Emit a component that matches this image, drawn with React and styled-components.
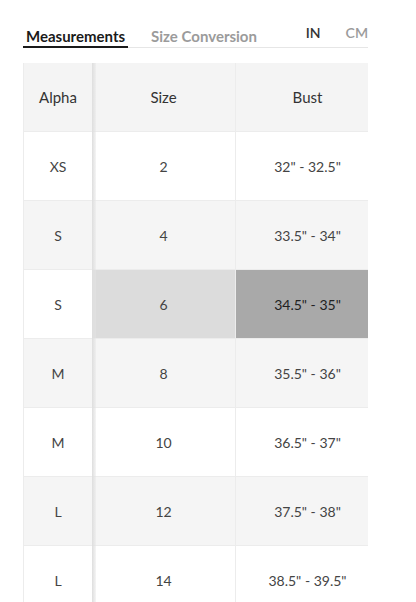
import React from "react";
import styled, { createGlobalStyle, css } from "styled-components";

const Global = createGlobalStyle`
  html, body { margin: 0; padding: 0; background: #fff; }
  body { font-family: Lato, "Noto Sans", sans-serif; color: #333; }
`;

const Page = styled.div`
  width: 345px;
  padding: 0 0 0 23px;
`;

const TabBar = styled.div`
  display: flex;
  align-items: flex-end;
  height: 48px;
  border-bottom: 1px solid #e6e6e6;
  box-sizing: border-box;
`;

const Tab = styled.div`
  font-size: 15px;
  line-height: 18px;
  font-weight: 700;
  padding: 0 3px 1px;
  margin-right: 20px;
  margin-bottom: -1px;
  color: ${(p) => (p.$active ? "#1a1a1a" : "#9b9b9b")};
  border-bottom: 2px solid ${(p) => (p.$active ? "#1a1a1a" : "transparent")};
`;

const Units = styled.div`
  display: flex;
  gap: 25px;
  margin-left: auto;
  align-self: flex-start;
  padding-top: 25px;
`;

const Unit = styled.span`
  font-size: 14px;
  line-height: 16px;
  font-weight: 600;
  color: ${(p) => (p.$active ? "#333" : "#9b9b9b")};
`;

const TableWrap = styled.div`
  margin-top: 15px;
  overflow: hidden;
  width: 345px;
`;

const Row = styled.div`
  display: grid;
  grid-template-columns: 69px 144px 144px;
  width: max-content;
  background: ${(p) => (p.$shade ? "#f5f5f5" : "#fff")};
`;

const Cell = styled.div`
  position: relative;
  box-sizing: border-box;
  height: 69px;
  display: flex;
  align-items: center;
  justify-content: center;
  font-size: 14px;
  color: #444;
  border-right: 1px solid #ececec;
  border-bottom: 1px solid #ececec;
  ${(p) => p.$header && css`
    font-size: 15px;
    color: #333;
    background: #f4f4f4;
  `}
  ${(p) => p.$tone === "light" && css`background: #dcdcdc;`}
  ${(p) => p.$tone === "dark" && css`background: #a9a9a9; color: #222;`}
`;

const StickyCell = styled(Cell)`
  border-left: 1px solid #ececec;
  border-right: none;
  background: ${(p) => (p.$header ? "#f4f4f4" : p.$shade ? "#f5f5f5" : "#fff")};
  &::after {
    content: "";
    position: absolute;
    top: 0;
    bottom: -1px;
    right: -4px;
    width: 4px;
    background: linear-gradient(to right, #dedede, rgba(230,230,230,0.4));
    z-index: 2;
  }
`;

const rows = [
  ["XS", "2", '32" - 32.5"'],
  ["S", "4", '33.5" - 34"'],
  ["S", "6", '34.5" - 35"'],
  ["M", "8", '35.5" - 36"'],
  ["M", "10", '36.5" - 37"'],
  ["L", "12", '37.5" - 38"'],
  ["L", "14", '38.5" - 39.5"'],
];

export default function App() {
  return (
    <>
      <Global />
      <Page>
        <TabBar>
          <Tab $active>Measurements</Tab>
          <Tab>Size Conversion</Tab>
          <Units>
            <Unit $active>IN</Unit>
            <Unit>CM</Unit>
          </Units>
        </TabBar>
        <TableWrap>
          <Row>
            <StickyCell $header>Alpha</StickyCell>
            <Cell $header>Size</Cell>
            <Cell $header>Bust</Cell>
          </Row>
          {rows.map((r, i) => {
            const shade = i % 2 === 1;
            const hl = i === 2;
            return (
              <Row key={i} $shade={shade}>
                <StickyCell $shade={shade}>{r[0]}</StickyCell>
                <Cell $tone={hl ? "light" : undefined}>{r[1]}</Cell>
                <Cell $tone={hl ? "dark" : undefined}>{r[2]}</Cell>
              </Row>
            );
          })}
        </TableWrap>
      </Page>
    </>
  );
}
